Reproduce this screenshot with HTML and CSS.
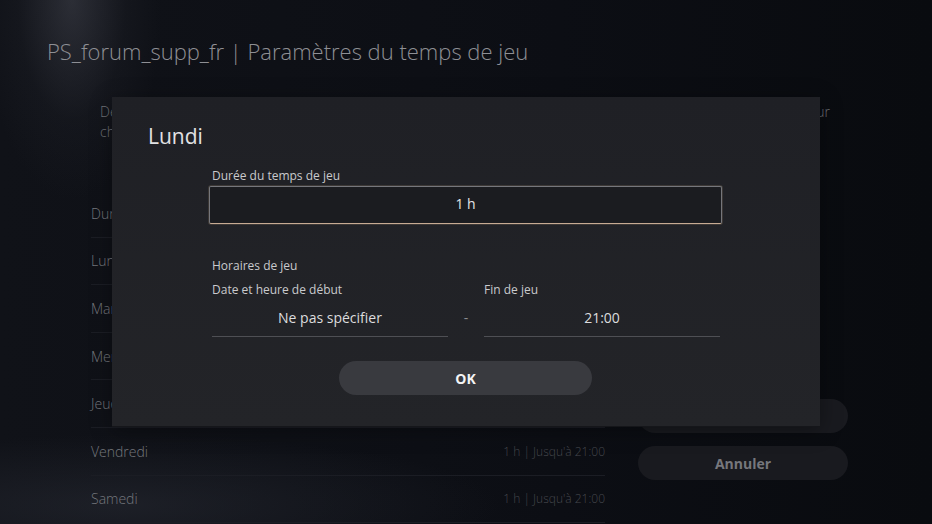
FILE: index.html
```html
<!DOCTYPE html>
<html lang="fr">
<head>
  <meta charset="UTF-8" />
  <meta name="viewport" content="width=device-width, initial-scale=1.0"/>
  <title>Paramètres du temps de jeu</title>
  <link rel="stylesheet" href="styles.css">
</head>
<body>
  <div class="screen">
    <header class="title">PS_forum_supp_fr | Paramètres du temps de jeu</header>

    <p class="intro">
      <span class="intro-line">Définissez la durée de jeu autorisée de l'enfant et l'heure de fin de jeu de chaque jour pour</span>
      <span>chaque jour de la semaine.</span>
    </p>

    <!-- LIST + ACTIONS -->
    <div class="content">
      <ul class="days">
        <li class="day"><span>Durée identique tous les jours</span><span class="val">Désactivé</span></li>
        <li class="day"><span>Lundi</span><span class="val">1 h | Jusqu'à 21:00</span></li>
        <li class="day"><span>Mardi</span><span class="val">1 h | Jusqu'à 21:00</span></li>
        <li class="day"><span>Mercredi</span><span class="val">1 h | Jusqu'à 21:00</span></li>
        <li class="day"><span>Jeudi</span><span class="val">1 h | Jusqu'à 21:00</span></li>
        <li class="day"><span>Vendredi</span><span class="val">1 h | Jusqu'à 21:00</span></li>
        <li class="day"><span>Samedi</span><span class="val">1 h | Jusqu'à 21:00</span></li>
      </ul>
      <div class="actions">
        <button class="pill">Enregistrer</button>
        <button class="pill">Annuler</button>
      </div>
    </div>

    <!-- MODAL -->
    <div class="modal">
      <h2>Lundi</h2>
      <div class="form">
        <div class="label">Durée du temps de jeu</div>
        <div class="duration">1 h</div>

        <div class="label section">Horaires de jeu</div>
        <div class="range">
          <div class="field">
            <div class="label">Date et heure de début</div>
            <div class="value">Ne pas spécifier</div>
          </div>
          <div class="dash">-</div>
          <div class="field">
            <div class="label">Fin de jeu</div>
            <div class="value">21:00</div>
          </div>
        </div>

        <button class="ok">OK</button>
      </div>
    </div>
  </div>
</body>
</html>
```

FILE: styles.css
```css
html, body {
  margin: 0;
  padding: 0;
  height: 100%;
  overflow: hidden;
  font-family: 'Open Sans', 'Noto Sans', sans-serif;
}

body {
  background-color: #0b0d12;
  background-image:
    radial-gradient(ellipse 90px 200px at 72px 0, rgba(72, 74, 84, 0.5), rgba(40, 42, 50, 0.2) 60%, transparent),
    radial-gradient(ellipse 380px 70px at 120px 505px, rgba(40, 43, 52, 0.55), transparent),
    linear-gradient(90deg, #101218 0%, #0c0e14 60%, #090b0f 100%);
}

.screen {
  position: relative;
  width: 932px;
  height: 524px;
}

.title {
  padding: 36px 0 0 47px;
  height: 30px;
  line-height: 30px;
  font-size: 22px;
  font-weight: 300;
  color: #8e8f94;
}

.intro {
  margin: 36px 0 0 100px;
  width: 730px;
  font-size: 14px;
  line-height: 20px;
  font-weight: 300;
  color: #707278;
}

.intro span {
  display: block;
}

.intro-line {
  text-align: justify;
  text-align-last: justify;
}

.content {
  display: flex;
  gap: 33px;
  margin: 48px 0 0 91px;
}

.days {
  list-style: none;
  margin: 0;
  padding: 0;
  width: 514px;
}

.day {
  display: flex;
  justify-content: space-between;
  align-items: center;
  box-sizing: border-box;
  height: 47.6px;
  border-bottom: 1px solid #1b1d24;
  font-size: 14px;
  font-weight: 300;
  color: #75777d;
}

.day .val {
  font-size: 12px;
  color: #45474d;
}

.actions {
  display: flex;
  flex-direction: column;
  gap: 13px;
  padding-top: 209px;
}

.pill {
  width: 210px;
  height: 34px;
  border: none;
  border-radius: 17px;
  background: #191a1f;
  color: #76777c;
  font-family: inherit;
  font-size: 14px;
  font-weight: 700;
}

/* MODAL */
.modal {
  position: absolute;
  left: 112px;
  top: 97px;
  width: 708px;
  height: 329px;
  box-sizing: border-box;
  padding: 24px 0 0 36px;
  background: linear-gradient(180deg, #1f2025 0%, #232428 100%);
  box-shadow: 0 1px 0 #15161a, 0 4px 20px rgba(0, 0, 0, 0.35);
}

.modal h2 {
  margin: 0;
  height: 30px;
  line-height: 30px;
  font-size: 21px;
  font-weight: 400;
  color: #e2e2e4;
}

.form {
  width: 513px;
  margin: 17px 0 0 61px;
  display: flex;
  flex-direction: column;
}

.label {
  height: 16px;
  line-height: 16px;
  padding-left: 3px;
  font-size: 12px;
  font-weight: 400;
  color: #c9cacd;
}

.label.section {
  margin-top: 34px;
}

.duration {
  margin-top: 2px;
  height: 36px;
  line-height: 34px;
  text-align: center;
  font-size: 14px;
  color: #e4e4e6;
  background: #1b1c20;
  border: 1px solid #75767b;
  border-bottom-color: #c7ab93;
  border-radius: 2px;
  box-shadow: 0 0 0 1px rgba(190, 160, 130, 0.18);
}

.range {
  display: grid;
  grid-template-columns: 236px 36px 236px;
  margin: 8px 0 0 3px;
}

.field .label {
  padding-left: 0;
}

.value {
  margin-top: 2px;
  height: 36px;
  line-height: 36px;
  text-align: center;
  font-size: 14px;
  color: #dcdcde;
  border-bottom: 1px solid #4e4f54;
}

.dash {
  padding-top: 18px;
  height: 36px;
  line-height: 36px;
  text-align: center;
  font-size: 14px;
  color: #8a8b90;
}

.ok {
  align-self: center;
  margin-top: 24px;
  width: 253px;
  height: 34px;
  border: none;
  border-radius: 17px;
  background: #393a3f;
  color: #f4f4f5;
  font-family: inherit;
  font-size: 14px;
  font-weight: 700;
}
```
